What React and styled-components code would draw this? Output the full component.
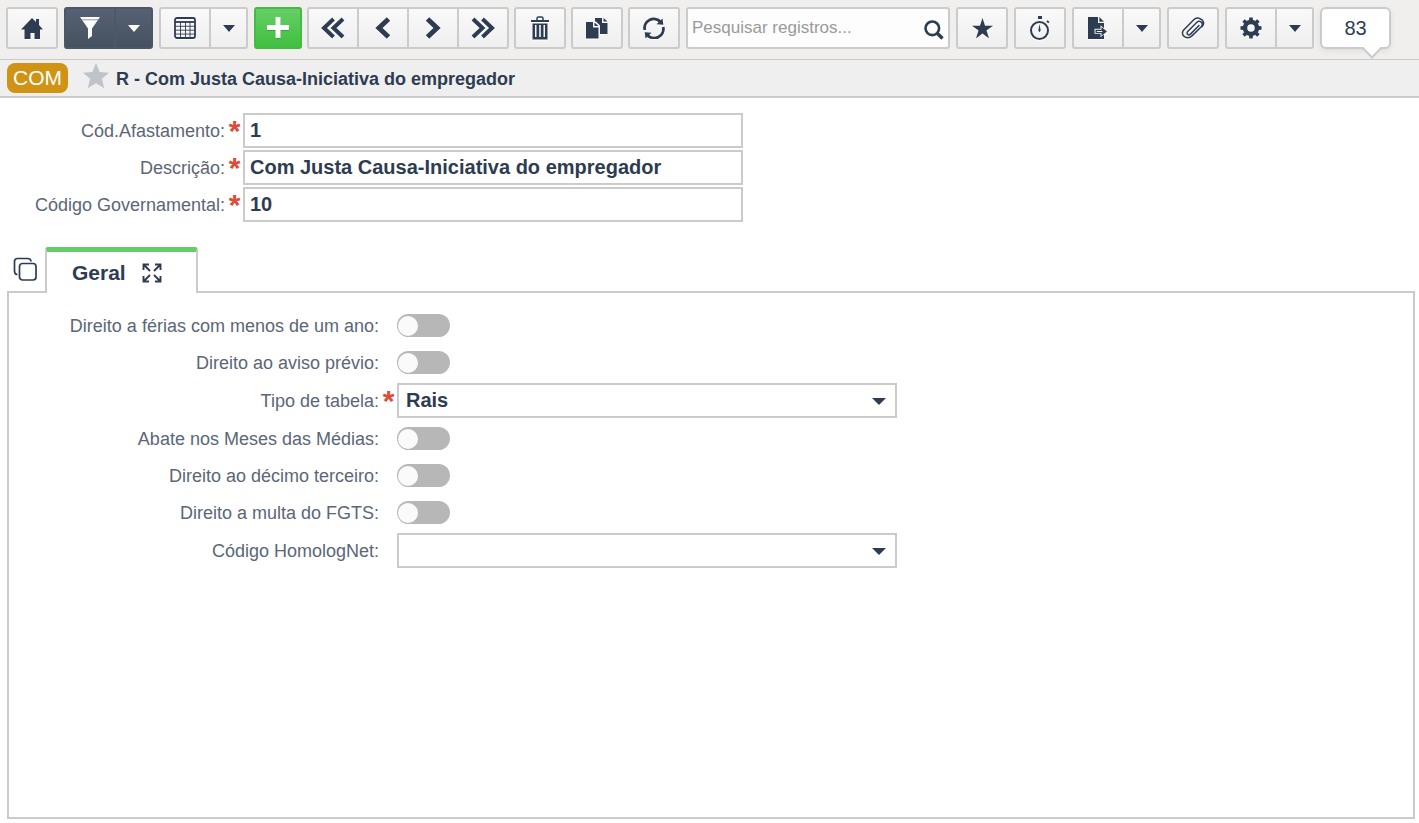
import { useState } from "react";
import styled, { createGlobalStyle, css } from "styled-components";

const dark = "#2e3c52";
const line = "#cbcbcb";

const GlobalStyle = createGlobalStyle`
    * {
        box-sizing: border-box;
    }

    body {
        margin: 0;
        background: #fff;
        color: ${dark};
        font-family: "Liberation Sans", Arial, sans-serif;
    }

    button, input, select {
        margin: 0;
        color: inherit;
        font-family: inherit;
    }
`;

const Page = styled.div`
    display: flex;
    flex-direction: column;
    min-height: 100vh;
`;

const Toolbar = styled.header`
    display: flex;
    gap: 6px;
    height: 60px;
    padding: 7px 6px 0;
    background: #f0efed;
    border-bottom: 1px solid ${line};
`;

const RecordActions = styled.div`
    display: flex;
    gap: 5px;
`;

const themes = {
    light: css`
        background: linear-gradient(#f9f9f9, #efefef);
        border-color: ${line};
    `,
    dark: css`
        background: linear-gradient(#566173, #465160);
        border-color: #4c5767;
        color: #fff;
    `,
    green: css`
        background: linear-gradient(#66cf66, #3fbf3f);
        border-color: #45bb45;
        color: #fff;
    `,
};

const widths = { icon: 52, caret: 39, add: 48 };

const ToolButton = styled.button`
    display: flex;
    align-items: center;
    justify-content: center;
    flex: none;
    width: ${(p) => widths[p.$size || "icon"]}px;
    height: 42px;
    padding: 0;
    border: 2px solid;
    border-radius: 3px;
    cursor: pointer;
    ${(p) => themes[p.$theme || "light"]}

    svg {
        display: block;
        filter: ${(p) => (p.$theme ? "none" : "drop-shadow(0 1px 0 #fff)")};
    }
`;

const ButtonGroup = styled.div`
    display: flex;

    ${ToolButton}:not(:first-child) {
        margin-left: -2px;
        border-top-left-radius: 0;
        border-bottom-left-radius: 0;
    }

    ${ToolButton}:not(:last-child) {
        border-top-right-radius: 0;
        border-bottom-right-radius: 0;
    }
`;

const SearchBox = styled.div`
    display: flex;
    align-items: center;
    flex: 0 1 264px;
    min-width: 120px;
    height: 42px;
    padding: 0 4px;
    background: #fdfdfd;
    border: 2px solid ${line};
    border-radius: 3px;
`;

const SearchInput = styled.input`
    flex: 1;
    min-width: 0;
    padding: 0;
    border: 0;
    outline: 0;
    background: none;
    font-size: 17px;

    &::placeholder {
        color: #9a9a9a;
        opacity: 1;
    }
`;

const SearchButton = styled.button`
    display: flex;
    padding: 4px 0 0;
    border: 0;
    background: none;
    cursor: pointer;
`;

const Counter = styled.output`
    position: relative;
    flex: none;
    width: 71px;
    height: 42px;
    background: #fff;
    border: 2px solid ${line};
    border-radius: 6px;
    box-shadow: 0 2px 6px rgba(0, 0, 0, 0.08);
    font-size: 20px;
    line-height: 38px;
    text-align: center;
`;

const CounterTail = styled.svg`
    position: absolute;
    right: 6px;
    bottom: -12px;
`;

const TitleBar = styled.div`
    display: flex;
    align-items: center;
    height: 38px;
    padding: 0 7px;
    background: #efefef;
    border-bottom: 2px solid ${line};
`;

const Badge = styled.span`
    width: 61px;
    height: 30px;
    background: #d09314;
    border-radius: 8px;
    color: #fff;
    font-size: 21px;
    line-height: 30px;
    text-align: center;
`;

const FavoriteButton = styled.button`
    display: flex;
    margin: 0 7px 0 15px;
    padding: 0 0 4px;
    border: 0;
    background: none;
    color: #bfc3ca;
    cursor: pointer;
`;

const Title = styled.h1`
    margin: 2px 0 0;
    font-size: 18px;
    line-height: 24px;
`;

const HeaderForm = styled.form`
    display: flex;
    flex-direction: column;
    gap: 2px;
    padding: 15px 0 25px;
`;

const Row = styled.div`
    display: flex;
    align-items: center;
    min-height: ${(p) => (p.$tall ? 39 : p.$compact ? 37 : 35)}px;
`;

const Label = styled.label`
    flex: none;
    width: ${(p) => p.$width}px;
    color: #5b6678;
    font-size: 18px;
    line-height: 22px;
    text-align: right;
`;

const Mark = styled.span`
    flex: none;
    width: 18px;
    padding-left: 1px;
    color: #dd4b39;
    font-size: 30px;
    font-weight: bold;
    line-height: 24px;
    text-align: center;
`;

const TextInput = styled.input`
    flex: 0 1 500px;
    min-width: 0;
    height: 35px;
    padding: 0 5px;
    border: 2px solid ${line};
    outline: 0;
    background: #fff;
    font-size: 20px;
    font-weight: bold;
`;

const SelectBox = styled.div`
    position: relative;
    flex: 0 1 500px;
    min-width: 0;

    svg {
        position: absolute;
        top: 15px;
        right: 11px;
        pointer-events: none;
    }
`;

const Select = styled.select`
    display: block;
    width: 100%;
    height: 35px;
    padding: 0 30px 1px 7px;
    appearance: none;
    border: 2px solid ${line};
    border-radius: 0;
    outline: 0;
    background: #fff;
    font-size: 20px;
    font-weight: bold;
`;

const Switch = styled.input`
    display: flex;
    align-items: center;
    width: 53px;
    height: 23px;
    padding: 0 1px;
    appearance: none;
    background: #b7b7b7;
    border-radius: 12px;
    cursor: pointer;

    &::before {
        content: "";
        width: 20px;
        height: 20px;
        border-radius: 50%;
        background: #fafafa;
    }

    &:checked {
        justify-content: flex-end;
        background: #66cc66;
    }
`;

const TabBar = styled.div`
    display: flex;
    align-items: center;
    padding-left: 13px;
`;

const PlainButton = styled.button`
    display: flex;
    padding: 0;
    border: 0;
    background: none;
    cursor: pointer;
`;

const Tab = styled.div`
    display: flex;
    align-items: center;
    gap: 16px;
    z-index: 1;
    width: 153px;
    height: 46px;
    margin: 0 0 -2px 8px;
    padding: 0 0 0 25px;
    background: #fff;
    border: 2px solid ${line};
    border-top: 5px solid #66cc66;
    border-bottom: 0;
    border-radius: 3px 3px 0 0;
`;

const TabLabel = styled.button`
    padding: 0;
    border: 0;
    background: none;
    font-size: 21px;
    font-weight: bold;
    line-height: 24px;
    cursor: pointer;
`;

const Panel = styled.section`
    flex: 1;
    margin: 0 4px 4px 7px;
    padding: 14px 0;
    border: 2px solid ${line};
`;

function Icon({ w, h, children }) {
    return (
        <svg width={w} height={h} viewBox={`0 0 ${w} ${h}`} fill="currentColor" aria-hidden="true">
            {children}
        </svg>
    );
}

const Caret = ({ w = 12 }) => (
    <Icon w={w} h={7}>
        <path d={`M0 0H${w}L${w / 2} 7Z`} />
    </Icon>
);

const HomeIcon = () => (
    <Icon w={22} h={22}>
        <path d="M11 1l4 4V2h3v6l4 4.500h-3V22h-5.500v-6h-4v6H3.500v-9.500H0Z" />
    </Icon>
);

const FilterIcon = () => (
    <Icon w={20} h={22}>
        <path d="M0 0h20l-8 11.500V19l-4 3V11.500Z" />
        <path d="M2 2.800h16" stroke="#8e97a4" strokeWidth="1" />
    </Icon>
);

const TableIcon = () => (
    <Icon w={22} h={22}>
        <rect x="1" y="1" width="20" height="20" rx="2" fill="none" stroke="currentColor" strokeWidth="1.800" />
        <path d="M1 9.300h20M1 13.200h20M1 17.100h20M6.500 5v16M11.500 5v16M16 5v16" stroke="currentColor" strokeWidth="0.900" />
        <path d="M1 5h20" stroke="currentColor" strokeWidth="1.800" />
    </Icon>
);

const PlusIcon = () => (
    <Icon w={22} h={22}>
        <path d="M0 11.500h22M11 1v21" stroke="#35a535" strokeWidth="5" />
        <path d="M0 10.500h22M11 0v21" stroke="#fff" strokeWidth="5" />
    </Icon>
);

function Chevrons({ double, flip }) {
    const w = double ? 24 : 16;
    return (
        <Icon w={w} h={23}>
            <g fill="none" stroke="currentColor" strokeWidth={double ? 4 : 5} transform={flip ? `translate(${w} 0) scale(-1 1)` : undefined}>
                {double ? <path d="M12.500 2L3 11l9.500 9M22 2l-9.500 9L22 20" /> : <path d="M13.500 2L4 11l9.500 9" />}
            </g>
        </Icon>
    );
}

const TrashIcon = () => (
    <Icon w={18} h={24}>
        <path d="M6 4V2.500Q6 1 7.500 1h3Q12 1 12 2.500V4" fill="none" stroke="currentColor" strokeWidth="1.500" />
        <path d="M0 4h18v2H0Z" />
        <path fillRule="evenodd" d="M1.500 7.500h15V23.500h-15ZM4 9v12h1.500V9ZM8.200 9v12h1.600V9ZM12.500 9v12H14V9Z" />
    </Icon>
);

const CopyIcon = () => (
    <Icon w={22} h={22}>
        <path d="M9 1h7v5h5.500v11H14V8.500L10 4.500H9Z" />
        <path d="M17.500 1v3.500h4Z" />
        <path d="M0 5h7v5.500h5.500V21.500H0Z" />
        <path d="M8.500 5.500V9h4Z" />
    </Icon>
);

const RefreshIcon = () => (
    <Icon w={22} h={22}>
        <path d="M1.800 13A9.200 9.200 0 0 1 17.500 4.800M20.200 10A9.200 9.200 0 0 1 4.500 18.200" fill="none" stroke="currentColor" strokeWidth="2.800" />
        <path d="M19.500 1.500l.8 6.300-6.800-.6ZM2.500 21.500l-.8-6.300 6.800.6Z" />
    </Icon>
);

const SearchIcon = () => (
    <Icon w={20} h={20}>
        <circle cx="8.300" cy="8.300" r="6.800" fill="none" stroke="currentColor" strokeWidth="2.600" />
        <path d="M12.500 12.500l6 6" stroke="currentColor" strokeWidth="3.400" />
    </Icon>
);

const StarIcon = ({ size = 21 }) => (
    <svg width={size} height={size} viewBox="0 0 21 21" fill="currentColor" aria-hidden="true">
        <path d={size > 21 ? "M10.500 0l3 7.200 7.500.6-5.700 5 1.800 7.500-6.600-4-6.600 4 1.800-7.500L0 7.800l7.500-.6Z" : "M10.500 0l2.500 7.700h8l-6.500 4.900 2.500 7.900-6.500-4.900L4 20.500l2.500-7.900L0 7.700h8Z"} />
    </svg>
);

const TimerIcon = () => (
    <Icon w={20} h={25}>
        <circle cx="9.500" cy="14.500" r="8.500" fill="none" stroke="currentColor" strokeWidth="2" />
        <path d="M8 0h4v3H8ZM17.500 4.300l2 1.400-1.200 1.600-2-1.500ZM9.500 8l.8 4.500q1.200 2-.8 3.800-2-1.800-.8-3.800Z" />
    </Icon>
);

const ExportIcon = () => (
    <Icon w={20} h={22}>
        <path d="M0 0h10v6h6v16H0Z" />
        <path d="M11.300 0v4.700H16Z" />
        <path d="M6.500 11.800h6V8.300l7.500 6-7.500 6v-3.500h-6Z" fill="#f4f4f4" />
        <path fillRule="evenodd" d="M7.500 12.700h6v-2.600l5.500 4.300-5.500 4.300v-2.600h-6ZM8.800 13.900v1h5.500v-1Z" />
    </Icon>
);

const ClipIcon = () => (
    <Icon w={24} h={22}>
        <path d="M18 8.500l-8.500 8.600c-2 2-4.700-.4-2.800-2.500l9-9.200c3-3 7.500.8 4.600 4.300l-9.300 9.200c-4.500 4.200-11.800.2-8.700-5.500L12.500 3c1.500-1.500 4.500-2.300 6.700-1.200 4 1.700 4.300 5.500 1.800 8" fill="none" stroke="currentColor" strokeWidth="1.500" strokeLinecap="round" />
    </Icon>
);

const GearIcon = () => (
    <Icon w={22} h={22}>
        <circle cx="11" cy="11" r="6" fill="none" stroke="currentColor" strokeWidth="4.500" />
        {[0, 45, 90, 135, 180, 225, 270, 315].map((a) => (
            <path key={a} d="M9 3.500L9.300.5h3.400l.3 3Z" transform={`rotate(${a} 11 11)`} />
        ))}
    </Icon>
);

const WindowsIcon = () => (
    <Icon w={24} h={24}>
        <g fill="none" stroke="currentColor" strokeWidth="1.700">
            <rect x="6.500" y="6.500" width="16.500" height="16.500" rx="3" />
            <path d="M4.500 17.500Q1.500 17.500 1.500 14V4.500Q1.500 1.500 4.500 1.500h10Q18 1.500 18 4.500" />
        </g>
    </Icon>
);

const ExpandIcon = () => (
    <Icon w={20} h={20}>
        <path d="M1.500 7V1.500H7M13 1.500h5.500V7M18.500 13v5.500H13M7 18.500H1.500V13M1.500 1.500l6.500 6.500M18.500 1.500L12 8M18.500 18.500L12 12M1.500 18.500L8 12" fill="none" stroke="currentColor" strokeWidth="1.900" />
    </Icon>
);

const headerFields = [
    { id: "codigo", label: "Cód.Afastamento:", value: "1" },
    { id: "descricao", label: "Descrição:", value: "Com Justa Causa-Iniciativa do empregador" },
    { id: "governamental", label: "Código Governamental:", value: "10" },
];

const generalFields = [
    { id: "ferias", label: "Direito a férias com menos de um ano:" },
    { id: "aviso", label: "Direito ao aviso prévio:" },
    { id: "tabela", label: "Tipo de tabela:", options: ["Rais"], required: true },
    { id: "medias", label: "Abate nos Meses das Médias:" },
    { id: "decimo", label: "Direito ao décimo terceiro:" },
    { id: "fgts", label: "Direito a multa do FGTS:" },
    { id: "homolognet", label: "Código HomologNet:", options: [""] },
];

function SplitButton({ label, theme, children }) {
    return (
        <ButtonGroup>
            <ToolButton type="button" $theme={theme} aria-label={label}>{children}</ToolButton>
            <ToolButton type="button" $theme={theme} $size="caret" aria-label={`Opções: ${label}`}><Caret /></ToolButton>
        </ButtonGroup>
    );
}

function GeneralField({ field }) {
    return (
        <Row $compact $tall={Boolean(field.options)}>
            <Label $width={370} htmlFor={field.id}>{field.label}</Label>
            <Mark aria-hidden="true">{field.required ? "*" : ""}</Mark>
            {field.options ? (
                <SelectBox>
                    <Select id={field.id} required={field.required}>
                        {field.options.map((o) => <option key={o}>{o}</option>)}
                    </Select>
                    <Caret w={14} />
                </SelectBox>
            ) : (
                <Switch id={field.id} type="checkbox" role="switch" />
            )}
        </Row>
    );
}

export default function App() {
    const [search, setSearch] = useState("");

    return (
        <Page>
            <GlobalStyle />
            <Toolbar>
                <ToolButton type="button" aria-label="Início"><HomeIcon /></ToolButton>
                <SplitButton label="Filtro" theme="dark"><FilterIcon /></SplitButton>
                <SplitButton label="Grade"><TableIcon /></SplitButton>
                <RecordActions>
                    <ToolButton type="button" $theme="green" $size="add" aria-label="Adicionar"><PlusIcon /></ToolButton>
                    <ButtonGroup>
                        <ToolButton type="button" aria-label="Primeiro"><Chevrons double /></ToolButton>
                        <ToolButton type="button" aria-label="Anterior"><Chevrons /></ToolButton>
                        <ToolButton type="button" aria-label="Próximo"><Chevrons flip /></ToolButton>
                        <ToolButton type="button" aria-label="Último"><Chevrons double flip /></ToolButton>
                    </ButtonGroup>
                    <ToolButton type="button" aria-label="Excluir"><TrashIcon /></ToolButton>
                    <ToolButton type="button" aria-label="Duplicar"><CopyIcon /></ToolButton>
                    <ToolButton type="button" aria-label="Atualizar"><RefreshIcon /></ToolButton>
                </RecordActions>
                <SearchBox>
                    <SearchInput
                        type="text"
                        aria-label="Pesquisar registros"
                        placeholder="Pesquisar registros..."
                        value={search}
                        onChange={(e) => setSearch(e.target.value)}
                    />
                    <SearchButton type="button" aria-label="Pesquisar"><SearchIcon /></SearchButton>
                </SearchBox>
                <ToolButton type="button" aria-label="Favoritos"><StarIcon /></ToolButton>
                <ToolButton type="button" aria-label="Histórico"><TimerIcon /></ToolButton>
                <SplitButton label="Exportar"><ExportIcon /></SplitButton>
                <ToolButton type="button" aria-label="Anexos"><ClipIcon /></ToolButton>
                <SplitButton label="Configurações"><GearIcon /></SplitButton>
                <Counter>
                    83
                    <CounterTail width="22" height="12" viewBox="0 0 22 12" aria-hidden="true">
                        <path d="M1 0L11 10.500 21 0" fill="#fff" stroke={line} strokeWidth="2" />
                    </CounterTail>
                </Counter>
            </Toolbar>

            <TitleBar>
                <Badge>COM</Badge>
                <FavoriteButton type="button" aria-label="Favoritar"><StarIcon size={26} /></FavoriteButton>
                <Title>R - Com Justa Causa-Iniciativa do empregador</Title>
            </TitleBar>

            <HeaderForm>
                {headerFields.map((f) => (
                    <Row key={f.id}>
                        <Label $width={225} htmlFor={f.id}>{f.label}</Label>
                        <Mark aria-hidden="true">*</Mark>
                        <TextInput id={f.id} defaultValue={f.value} required />
                    </Row>
                ))}
            </HeaderForm>

            <TabBar>
                <PlainButton type="button" aria-label="Abas"><WindowsIcon /></PlainButton>
                <Tab>
                    <TabLabel type="button">Geral</TabLabel>
                    <PlainButton type="button" aria-label="Expandir"><ExpandIcon /></PlainButton>
                </Tab>
            </TabBar>
            <Panel>
                {generalFields.map((f) => <GeneralField key={f.id} field={f} />)}
            </Panel>
        </Page>
    );
}
